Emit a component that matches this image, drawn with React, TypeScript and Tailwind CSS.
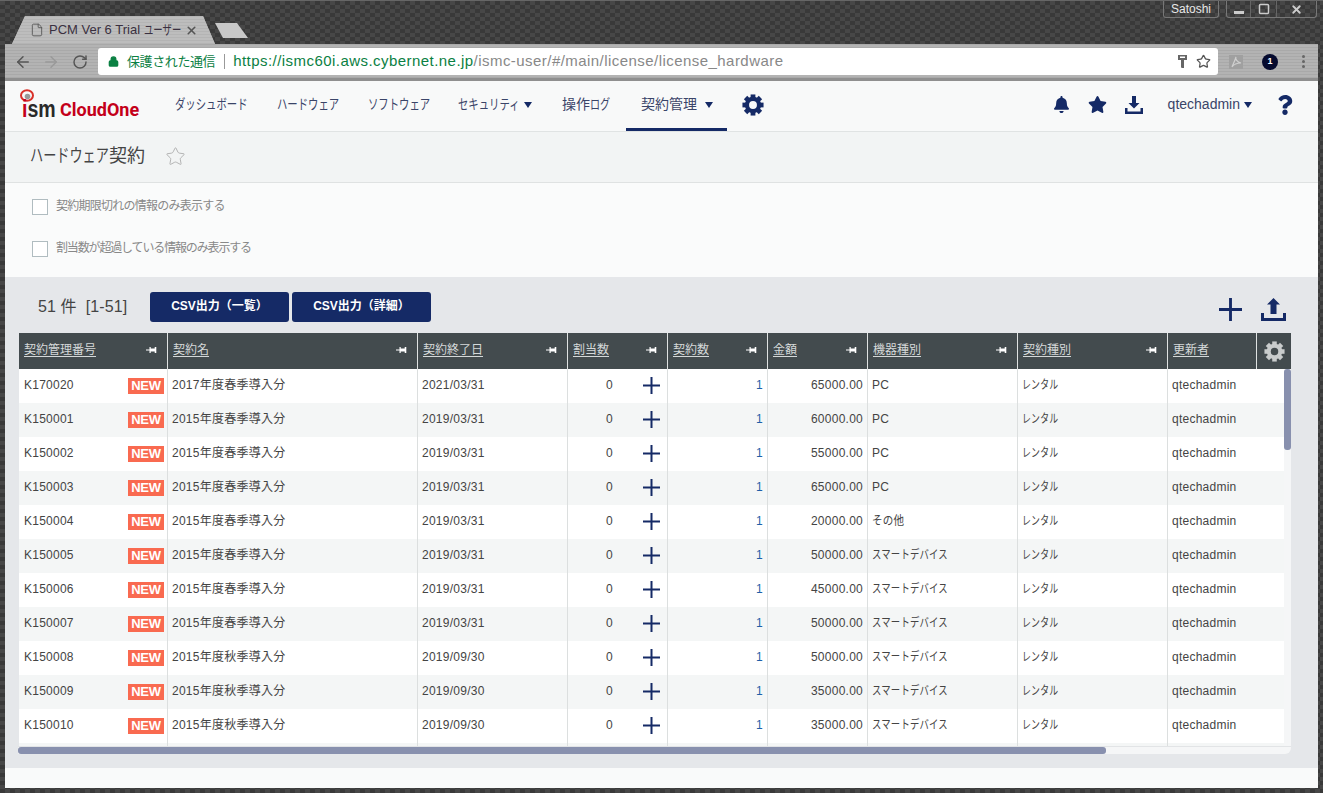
import { ArrowLeft, ArrowRight, RotateCw, File, X, Star, Lock, Square } from "lucide-react";
import { FaBell, FaStar, FaQuestion } from "react-icons/fa";

const navy = "#152a66";

type Row = { id: string; name: string; end: string; price: string; kind: string };

const rows: Row[] = [
  { id: "K170020", name: "2017年度春季導入分", end: "2021/03/31", price: "65000.00", kind: "PC" },
  { id: "K150001", name: "2015年度春季導入分", end: "2019/03/31", price: "60000.00", kind: "PC" },
  { id: "K150002", name: "2015年度春季導入分", end: "2019/03/31", price: "55000.00", kind: "PC" },
  { id: "K150003", name: "2015年度春季導入分", end: "2019/03/31", price: "65000.00", kind: "PC" },
  { id: "K150004", name: "2015年度春季導入分", end: "2019/03/31", price: "20000.00", kind: "その他" },
  { id: "K150005", name: "2015年度春季導入分", end: "2019/03/31", price: "50000.00", kind: "スマートデバイス" },
  { id: "K150006", name: "2015年度春季導入分", end: "2019/03/31", price: "45000.00", kind: "スマートデバイス" },
  { id: "K150007", name: "2015年度春季導入分", end: "2019/03/31", price: "50000.00", kind: "スマートデバイス" },
  { id: "K150008", name: "2015年度秋季導入分", end: "2019/09/30", price: "50000.00", kind: "スマートデバイス" },
  { id: "K150009", name: "2015年度秋季導入分", end: "2019/09/30", price: "35000.00", kind: "スマートデバイス" },
  { id: "K150010", name: "2015年度秋季導入分", end: "2019/09/30", price: "35000.00", kind: "スマートデバイス" },
];

const teeth = [0, 45, 90, 135, 180, 225, 270, 315];

function Gear({ size, color }: { size: number; color: string }) {
  return (
    <svg width={size} height={size} viewBox="0 0 24 24" fill={color} className="shrink-0">
      <circle cx="12" cy="12" r="6.6" fill="none" stroke={color} strokeWidth="4.6" />
      {teeth.map((deg) => (
        <rect key={deg} x="9.4" y="0.5" width="5.2" height="6" transform={`rotate(${deg} 12 12)`} />
      ))}
    </svg>
  );
}

function Pin() {
  return (
    <svg width="11" height="8" viewBox="0 0 11 8" fill="#fff" className="shrink-0">
      <path d="M0 3.4h3.5V4.6H0zM3.5 1h1.2v6H3.5zM4.7 2.5h4v3h-4zM8.7 1h1.6v6H8.7z" />
    </svg>
  );
}

function Caret({ className }: { className: string }) {
  return (
    <svg viewBox="0 0 8 6" fill={navy} className={className}>
      <path d="M0 0h8L4 6z" />
    </svg>
  );
}

function PlusIcon() {
  return (
    <svg width="17" height="17" viewBox="0 0 17 17" fill={navy} className="shrink-0">
      <path d="M7.5 0h2v7.5H17v2H9.5V17h-2V9.5H0v-2h7.5z" />
    </svg>
  );
}

function NavItem({ children, caret, active, className }: { children: React.ReactNode; caret?: boolean; active?: boolean; className: string }) {
  return (
    <div className={`flex h-full shrink-0 items-center gap-2 text-[14px] text-[#3a4468] ${active ? "border-b-[3px] border-[#152a66]" : "pb-[3px]"} ${className}`}>
      {children}
      {caret && <Caret className="w-2 h-1.5" />}
    </div>
  );
}

function HeadCell({ label, pin = true }: { label: string; pin?: boolean }) {
  return (
    <div className="flex items-center justify-between border-r border-[#dfe2e2] pl-[5px] pr-[10px] pb-[2px]">
      <span className="underline underline-offset-2 text-[12px] text-[#d5d9d9]">{label}</span>
      {pin && <Pin />}
    </div>
  );
}

function Cell({ children, className = "" }: { children?: React.ReactNode; className?: string }) {
  return <div className={`flex items-center border-r border-[#dcdfdf] pb-[2px] text-[12px] ${className}`}>{children}</div>;
}

function KindText({ kind }: { kind: string }) {
  if (kind === "スマートデバイス") {
    return <span className="inline-block origin-left scale-x-[0.78] whitespace-nowrap">{kind}</span>;
  }
  if (kind === "その他") {
    return <span className="inline-block origin-left scale-x-[0.88] whitespace-nowrap">{kind}</span>;
  }
  return <span>{kind}</span>;
}

const rowGrid = "grid grid-cols-[149px_250px_150px_100px_100px_100px_150px_150px_116px]";

function TableRow({ row, odd }: { row: Row; odd: boolean }) {
  return (
    <div className={`${rowGrid} h-[34px] tracking-[0.25px] text-[#444] ${odd ? "bg-[#f4f6f6]" : "bg-white"}`}>
      <Cell className="justify-between pl-[5px] pr-[3px]">
        <span>{row.id}</span>
        <span className="mt-[2px] flex h-4 w-9 items-center justify-center bg-[#f96a50] text-[13px] font-bold tracking-[-0.3px] text-white">NEW</span>
      </Cell>
      <Cell className="pl-1">{row.name}</Cell>
      <Cell className="pl-1">{row.end}</Cell>
      <Cell className="justify-end pr-[7px]">
        <span className="mr-[30px]">0</span>
        <PlusIcon />
      </Cell>
      <Cell className="justify-end pr-[4px] text-[#1f5fa8]">1</Cell>
      <Cell className="justify-end pr-1">{row.price}</Cell>
      <Cell className="pl-1">
        <KindText kind={row.kind} />
      </Cell>
      <Cell className="pl-1">
        <span className="inline-block origin-left scale-x-[0.74] whitespace-nowrap">レンタル</span>
      </Cell>
      <Cell className="pl-1 border-r-0">qtechadmin</Cell>
    </div>
  );
}

export default function App() {
  return (
    <div className="flex h-[793px] w-[1323px] flex-col overflow-hidden border-t border-[#666] bg-[#3f3f3f] bg-[repeating-conic-gradient(#393939_0_25%,#474747_0_50%)] bg-[length:10px_8px] px-[5px] pb-[5px] [font-family:Liberation_Sans,Noto_Sans_CJK_JP,sans-serif]">
      {/* title bar with tabs */}
      <div className="relative flex h-[43px] shrink-0 items-end">
        <div className="ml-[7px] flex h-[28px] w-[203px] items-center bg-[#b9b9b9] bg-[repeating-linear-gradient(0deg,#b4b4b4_0_1px,#bdbdbd_1px_3px)] pl-[18px] pr-[17px] [clip-path:polygon(0_100%,13px_0,191px_0,100%_100%)]">
          <File size={14} strokeWidth={1.5} color="#555" className="shrink-0" />
          <span className="ml-[5px] w-[131px] shrink-0 whitespace-nowrap text-[13px] text-[#3a3040]">
            PCM Ver 6 Trial{" "}
            <span className="inline-block w-[34px] origin-left scale-x-[0.72]">ユーザー</span>
          </span>
          <X size={13} strokeWidth={3} color="#555" className="ml-auto shrink-0" />
        </div>
        <div className="mb-[6px] h-[15px] w-[33px] bg-[#c8c8c8] [clip-path:polygon(0_0,22px_0,100%_100%,8px_100%)]" />
        <div className="absolute right-[1px] top-0 flex h-[17px]">
          <div className="flex w-[56px] items-center justify-center rounded-b-[3px] border border-t-0 border-[#777] text-[12px] text-[#e8e8e8]">Satoshi</div>
          <div className="ml-[7px] flex w-[91px] rounded-b-[3px] border border-t-0 border-[#777]">
            <div className="flex w-[24px] items-end justify-center border-r border-[#666] pb-[3px]">
              <span className="h-[3px] w-[10px] bg-[#ccc]" />
            </div>
            <div className="flex w-[26px] items-center justify-center border-r border-[#666]">
              <Square size={12} strokeWidth={3} color="#ccc" />
            </div>
            <div className="flex flex-1 items-center justify-center">
              <X size={13} strokeWidth={3.5} color="#ccc" />
            </div>
          </div>
        </div>
      </div>

      {/* browser toolbar */}
      <div className="flex h-[37px] shrink-0 items-center border-b-[3px] border-[#8f8f8f] bg-[#adadad] bg-[repeating-linear-gradient(0deg,#a9a9a9_0_1px,#b3b3b3_1px_3px)] pt-[1px]">
        <ArrowLeft size={18} strokeWidth={2} color="#555" className="ml-[9px]" />
        <ArrowRight size={18} strokeWidth={2} color="#999" className="ml-[10px]" />
        <RotateCw size={16} strokeWidth={2.2} color="#555" className="ml-[12px]" />
        <div className="ml-[10px] flex h-[27px] w-[1120px] items-center rounded-[3px] bg-white pl-[10px] pr-[7px]">
          <Lock size={11} strokeWidth={3} color="#0b8043" fill="#0b8043" />
          <span className="ml-[8px] text-[13px] tracking-[-0.4px] text-[#0b8043]">保護された通信</span>
          <span className="ml-[9px] mr-[8px] h-[15px] w-px bg-[#999]" />
          <span className="whitespace-nowrap text-[15px] tracking-[0.45px] text-[#0b8043]">https://ismc60i.aws.cybernet.ne.jp</span>
          <span className="whitespace-nowrap text-[15px] tracking-[0.45px] text-[#888]">/ismc-user/#/main/license/license_hardware</span>
          <svg width="9" height="13" viewBox="0 0 9 13" fill="#666" className="ml-auto">
            <path fillRule="evenodd" d="M0 0h9v5H6v8H3.6l-.6-1V5H0zM2 1.5v1.5h5V1.5z" />
          </svg>
          <Star size={15} strokeWidth={2} color="#555" className="ml-[9px]" />
        </div>
        <div className="ml-[11px] flex h-[14px] w-[14px] items-center justify-center bg-[#a0a0a0]">
          <svg width="12" height="12" viewBox="0 0 12 12" fill="none" stroke="#cfcfcf" strokeWidth="1.2">
            <path d="M6 1c-1 2 1 5 5 6-3 0-7 1-9 4 1-3 3-6 4-10z" />
          </svg>
        </div>
        <div className="ml-[19px] flex h-4 w-4 items-center justify-center rounded-full bg-[#050a2e] text-[9px] font-bold text-white">1</div>
        <div className="ml-[24px] flex flex-col gap-[2px]">
          <span className="h-[3px] w-[3px] rounded-full bg-[#666]" />
          <span className="h-[3px] w-[3px] rounded-full bg-[#666]" />
          <span className="h-[3px] w-[3px] rounded-full bg-[#666]" />
        </div>
      </div>

      {/* app navigation */}
      <div className="flex h-[51px] shrink-0 items-center border-b border-[#e0e3e3] bg-[#f8f9f9]">
        <div className="relative ml-[15px] flex h-full w-[155px] shrink-0 items-center pt-[7px]">
          <svg width="14" height="13" viewBox="0 0 14 13" className="absolute left-0 top-[8px]">
            <ellipse cx="7" cy="6.5" rx="6" ry="5.2" fill="none" stroke="#d8312a" strokeWidth="2" />
            <circle cx="7.5" cy="7.5" r="2.8" fill="#999" />
          </svg>
          <span className="inline-block w-[40px] origin-left translate-x-[2px] scale-x-[0.85] whitespace-nowrap text-[23px] font-bold leading-none">
            <span className="text-[#c4001a]">i</span>
            <span className="text-[#2a2a2a]">sm</span>
          </span>
          <span className="[font-family:Roboto] text-[18px] font-bold leading-none text-[#c4001a]">CloudOne</span>
        </div>
        <NavItem className="w-[102px]">
          <span className="inline-block origin-left scale-x-[0.74] whitespace-nowrap">ダッシュボード</span>
        </NavItem>
        <NavItem className="w-[91px]">
          <span className="inline-block origin-left scale-x-[0.74] whitespace-nowrap">ハードウェア</span>
        </NavItem>
        <NavItem className="w-[90px]">
          <span className="inline-block origin-left scale-x-[0.74] whitespace-nowrap">ソフトウェア</span>
        </NavItem>
        <NavItem caret className="w-[104px]">
          <span className="inline-block w-[58px] origin-left scale-x-[0.74] whitespace-nowrap">セキュリティ</span>
        </NavItem>
        <NavItem className="w-[64px]">
          <span className="whitespace-nowrap">
            操作<span className="inline-block w-[20px] origin-left scale-x-[0.72]">ログ</span>
          </span>
        </NavItem>
        <NavItem caret active className="w-[101px] pl-[15px]">
          <span className="whitespace-nowrap">契約管理</span>
        </NavItem>
        <div className="ml-[15px] pb-[2px]">
          <Gear size={22} color={navy} />
        </div>
        <div className="ml-auto flex items-center pb-[3px]">
          <FaBell size={17} color={navy} />
          <FaStar size={19} color={navy} className="ml-[18px]" />
          <svg width="18" height="18" viewBox="0 0 18 18" fill={navy} className="ml-[18px]">
            <path d="M7 0h4v7h3.5L9 12.5 3.5 7H7zM0 12h2.5v3.5h13V12H18v6H0z" />
          </svg>
          <span className="ml-[25px] text-[14px] text-[#3a4468]">qtechadmin</span>
          <Caret className="ml-[4px] w-2 h-1.5" />
          <FaQuestion size={20} color={navy} className="ml-[23px] mr-[23px]" />
        </div>
      </div>

      {/* page heading */}
      <div className="flex h-[51px] shrink-0 items-center gap-[20px] border-b border-[#dfe2e2] bg-[#f2f4f4] pl-[25px] pb-[2px]">
        <span className="whitespace-nowrap text-[18px] text-[#444]">
          <span className="inline-block w-[79px] origin-left scale-x-[0.73]">ハードウェア</span>契約
        </span>
        <Star size={21} strokeWidth={1} color="#aaa" />
      </div>

      {/* filters */}
      <div className="flex h-[94px] shrink-0 flex-col gap-[26px] bg-[#fafbfb] pl-[27px] pt-[16px]">
        <label className="flex h-4 items-center gap-2 text-[12px] leading-4 tracking-[-0.75px] text-[#888]">
          <span className="h-4 w-4 shrink-0 border border-[#b0bcc0] bg-white" />
          <span className="mb-[2px]">契約期限切れの情報のみ表示する</span>
        </label>
        <label className="flex h-4 items-center gap-2 text-[12px] leading-4 tracking-[-1.15px] text-[#888]">
          <span className="h-4 w-4 shrink-0 border border-[#b0bcc0] bg-white" />
          <span className="mb-[2px]">割当数が超過している情報のみ表示する</span>
        </label>
      </div>

      {/* list */}
      <div className="flex min-h-0 flex-1 flex-col bg-[#e5e7ea] pl-[14px] pr-[27px] pt-[15px]">
        <div className="flex h-[30px] items-center">
          <span className="ml-[19px] w-[112px] whitespace-pre text-[16px] tracking-[0.1px] text-[#444]">51 件  [1-51]</span>
          <button className="h-[30px] w-[139px] rounded-[3px] bg-[#152a66] pb-[2px] text-[12px] font-bold text-white">CSV出力（一覧）</button>
          <button className="ml-[3px] h-[30px] w-[139px] rounded-[3px] bg-[#152a66] pb-[2px] text-[12px] font-bold text-white">CSV出力（詳細）</button>
          <svg width="23" height="23" viewBox="0 0 24 24" fill={navy} className="ml-auto mt-[4px]">
            <path d="M10.5 0h3v10.5H24v3H13.5V24h-3V13.5H0v-3h10.5z" />
          </svg>
          <svg width="25" height="23" viewBox="0 0 25 23" fill={navy} className="ml-[19px] mr-[5px] mt-[4px]">
            <path d="M12.5 0L19 6.5h-3.5V16h-6V6.5H6zM0 15h3v5h19v-5h3v8H0z" />
          </svg>
        </div>

        <div className="mt-[11px] flex flex-col">
          <div className="grid h-[36px] grid-cols-[149px_250px_150px_100px_100px_100px_150px_150px_89px_34px] bg-[#434b4e]">
            <HeadCell label="契約管理番号" />
            <HeadCell label="契約名" />
            <HeadCell label="契約終了日" />
            <HeadCell label="割当数" />
            <HeadCell label="契約数" />
            <HeadCell label="金額" />
            <HeadCell label="機器種別" />
            <HeadCell label="契約種別" />
            <HeadCell label="更新者" pin={false} />
            <div className="flex items-center justify-center">
              <Gear size={21} color="#c9cccc" />
            </div>
          </div>
          <div className="flex h-[377px]">
            <div className="w-[1265px] overflow-hidden">
              {rows.map((row, i) => (
                <TableRow key={row.id} row={row} odd={i % 2 === 1} />
              ))}
              <div className={`${rowGrid} h-[3px] bg-[#f4f6f6]`}>
                <Cell />
                <Cell />
                <Cell />
                <Cell />
                <Cell />
                <Cell />
                <Cell />
                <Cell />
              </div>
            </div>
            <div className="w-[7px] bg-[#f5f6f7]">
              <div className="h-[81px] rounded-[3px] bg-[#8890ae]" />
            </div>
          </div>
          <div className="-ml-px h-[8px] w-[1273px] rounded-br-[6px] border-t border-[#e2e4e6] bg-[#f5f6f7]">
            <div className="h-[7px] w-[1088px] rounded-[3px] bg-[#8890ae]" />
          </div>
        </div>
      </div>

      {/* footer strip */}
      <div className="h-[20px] shrink-0 bg-[#f9fafa]" />
    </div>
  );
}
